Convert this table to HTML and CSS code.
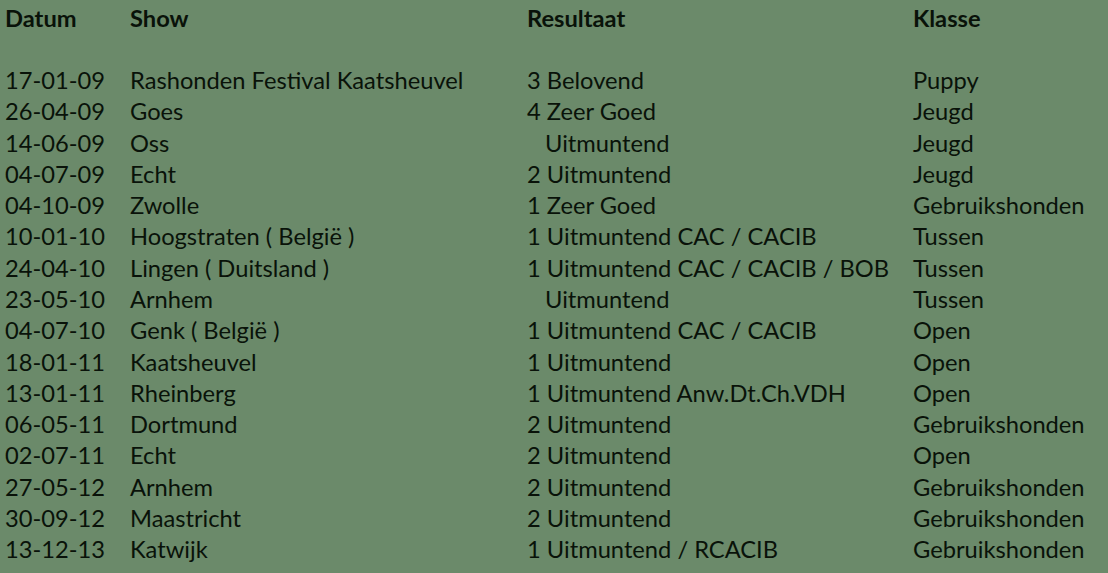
FILE: index.html
```html
<!DOCTYPE html>
<html lang="nl">
<head>
<meta charset="utf-8">
<title>Shows</title>
<link rel="stylesheet" href="styles.css">
</head>
<body>
<div class="results">
  <div class="row head"><span>Datum</span><span>Show</span><span>Resultaat</span><span>Klasse</span></div>
  <div class="row spacer"></div>
  <div class="row"><span>17-01-09</span><span>Rashonden Festival Kaatsheuvel</span><span>3 Belovend</span><span>Puppy</span></div>
  <div class="row"><span>26-04-09</span><span>Goes</span><span>4 Zeer Goed</span><span>Jeugd</span></div>
  <div class="row"><span>14-06-09</span><span>Oss</span><span class="indent">Uitmuntend</span><span>Jeugd</span></div>
  <div class="row"><span>04-07-09</span><span>Echt</span><span>2 Uitmuntend</span><span>Jeugd</span></div>
  <div class="row"><span>04-10-09</span><span>Zwolle</span><span>1 Zeer Goed</span><span>Gebruikshonden</span></div>
  <div class="row"><span>10-01-10</span><span>Hoogstraten ( België )</span><span>1 Uitmuntend CAC / CACIB</span><span>Tussen</span></div>
  <div class="row"><span>24-04-10</span><span>Lingen ( Duitsland )</span><span>1 Uitmuntend CAC / CACIB / BOB</span><span>Tussen</span></div>
  <div class="row"><span>23-05-10</span><span>Arnhem</span><span class="indent">Uitmuntend</span><span>Tussen</span></div>
  <div class="row"><span>04-07-10</span><span>Genk ( België )</span><span>1 Uitmuntend CAC / CACIB</span><span>Open</span></div>
  <div class="row"><span>18-01-11</span><span>Kaatsheuvel</span><span>1 Uitmuntend</span><span>Open</span></div>
  <div class="row"><span>13-01-11</span><span>Rheinberg</span><span>1 Uitmuntend Anw.Dt.Ch.VDH</span><span>Open</span></div>
  <div class="row"><span>06-05-11</span><span>Dortmund</span><span>2 Uitmuntend</span><span>Gebruikshonden</span></div>
  <div class="row"><span>02-07-11</span><span>Echt</span><span>2 Uitmuntend</span><span>Open</span></div>
  <div class="row"><span>27-05-12</span><span>Arnhem</span><span>2 Uitmuntend</span><span>Gebruikshonden</span></div>
  <div class="row"><span>30-09-12</span><span>Maastricht</span><span>2 Uitmuntend</span><span>Gebruikshonden</span></div>
  <div class="row"><span>13-12-13</span><span>Katwijk</span><span>1 Uitmuntend / RCACIB</span><span>Gebruikshonden</span></div>
</div>
</body>
</html>
```
FILE: styles.css
```css
html, body {
  margin: 0;
  padding: 0;
  background: #6b8a6a;
}
body {
  font-family: Lato, "Open Sans", sans-serif;
  font-size: 23.7px;
  color: #091209;
}
.results {
  padding: 2px 0 0 5px;
}
.row {
  display: grid;
  grid-template-columns: 125px 397px 386px auto;
  height: 31.27px;
  align-items: center;
  white-space: nowrap;
}
.head {
  font-weight: 700;
}
.indent {
  padding-left: 18px;
}
```
